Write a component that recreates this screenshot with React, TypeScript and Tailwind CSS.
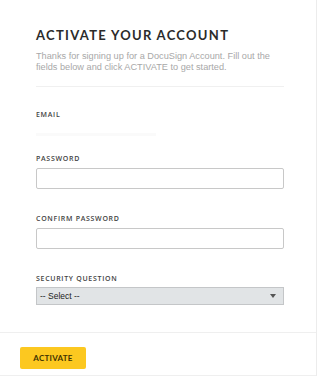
export default function App() {
  const label = "block text-[7px] font-semibold tracking-[0.1em] text-[#444] [font-family:'Open_Sans',sans-serif]";
  return (
    <div className="w-[320px] h-[376px] bg-white overflow-hidden">
      <div className="w-[317px] h-[376px] border-r border-[#ececec] flex flex-col">
        <div className="pl-9 pr-8 pt-[28px] flex-1">
          <h1 className="text-[13px] leading-[14px] font-bold tracking-[0.1em] text-[#2b2b2b] [font-family:Lato,sans-serif]">
            ACTIVATE YOUR ACCOUNT
          </h1>
          <p className="mt-[9px] text-[9.2px] leading-[11px] text-[#a8a8a8] [font-family:'Liberation_Sans',Arial,sans-serif]">
            Thanks for signing up for a DocuSign Account. Fill out the fields below and click ACTIVATE to get started.
          </p>
          <div className="mt-[13px] border-t border-[#f0f0f0]" />

          <div className="mt-[23px]">
            <span className={label}>EMAIL</span>
            <div className="mt-[12px] h-[3px] w-[120px] bg-[#fafafa]" />
          </div>

          <div className="mt-[18px]">
            <span className={label}>PASSWORD</span>
            <input type="password" className="mt-[4px] block w-full h-[21px] border border-[#c8c8c8] rounded-[2px] bg-white outline-none" />
          </div>

          <div className="mt-[25px]">
            <span className={label}>CONFIRM PASSWORD</span>
            <input type="password" className="mt-[3px] block w-full h-[21px] border border-[#c8c8c8] rounded-[2px] bg-white outline-none" />
          </div>

          <div className="mt-[25px]">
            <span className={label}>SECURITY QUESTION</span>
            <div className="mt-[3px] h-[18px] w-full border border-[#c4c6c8] bg-[#e1e4e6] flex items-center justify-between pl-[3px] pr-[7px]">
              <span className="text-[8.5px] text-[#222] [font-family:'Liberation_Sans',Arial,sans-serif]">-- Select --</span>
              <svg width="6" height="4" viewBox="0 0 6 4"><path d="M0 0h6L3 4z" fill="#555" /></svg>
            </div>
          </div>
        </div>
        <div className="h-[44px] border-t border-b border-[#efefef] pl-5 pt-[10px]">
          <button className="w-[66px] h-[22px] bg-[#fcc820] rounded-[2px] text-[8px] font-bold tracking-[0.03em] text-[#3f3200] [font-family:Lato,sans-serif]">
            ACTIVATE
          </button>
        </div>
      </div>
    </div>
  );
}
